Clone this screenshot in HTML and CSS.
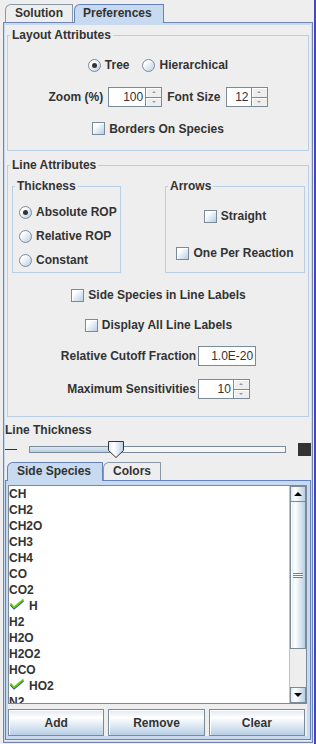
FILE: index.html
```html
<!DOCTYPE html>
<html lang="en">
<head>
  <meta charset="UTF-8">
  <meta name="viewport" content="width=device-width, initial-scale=1.0">
  <title>Preferences</title>
  <link rel="stylesheet" href="styles.css">
</head>
<body>
  <div class="frame">
    <div class="tab-strip">
      <div class="tab tab-solution">Solution</div>
      <div class="tab tab-prefs selected">Preferences</div>
    </div>
    <div class="tab-body main-body">

      <fieldset class="group layout-group">
        <legend>Layout Attributes</legend>
        <div class="layout-inner">
          <div class="row row-radio">
            <span class="opt"><span class="radio on"></span>Tree</span>
            <span class="opt"><span class="radio"></span>Hierarchical</span>
          </div>
          <div class="row row-zoom">
            <span>Zoom (%)</span>
            <span class="spinner w-zoom">
              <span class="spin-field">100</span>
              <span class="spin-btns"><span class="spin-btn up"></span><span class="spin-btn down"></span></span>
            </span>
            <span>Font Size</span>
            <span class="spinner w-font">
              <span class="spin-field">12</span>
              <span class="spin-btns"><span class="spin-btn up"></span><span class="spin-btn down"></span></span>
            </span>
          </div>
          <div class="row row-borders">
            <span class="opt"><span class="check"></span>Borders On Species</span>
          </div>
        </div>
      </fieldset>

      <fieldset class="group line-group">
        <legend>Line Attributes</legend>
        <div class="line-inner">
          <div class="sub-groups">
            <fieldset class="group thickness-group">
              <legend>Thickness</legend>
              <div class="thickness-inner">
                <div class="opt-row"><span class="opt"><span class="radio on"></span>Absolute ROP</span></div>
                <div class="opt-row"><span class="opt"><span class="radio"></span>Relative ROP</span></div>
                <div class="opt-row"><span class="opt"><span class="radio"></span>Constant</span></div>
              </div>
            </fieldset>
            <fieldset class="group arrows-group">
              <legend>Arrows</legend>
              <div class="arrows-inner">
                <div class="opt-row"><span class="opt"><span class="check"></span>Straight</span></div>
                <div class="opt-row"><span class="opt"><span class="check"></span>One Per Reaction</span></div>
              </div>
            </fieldset>
          </div>
          <div class="row row-side">
            <span class="opt"><span class="check"></span>Side Species in Line Labels</span>
          </div>
          <div class="row row-display">
            <span class="opt"><span class="check"></span>Display All Line Labels</span>
          </div>
          <div class="row row-cutoff">
            <span>Relative Cutoff Fraction</span>
            <span class="text-field">1.0E-20</span>
          </div>
          <div class="row row-max">
            <span>Maximum Sensitivities</span>
            <span class="spinner w-max">
              <span class="spin-field">10</span>
              <span class="spin-btns"><span class="spin-btn up"></span><span class="spin-btn down"></span></span>
            </span>
          </div>
        </div>
      </fieldset>

      <div class="slider-label">Line Thickness</div>
      <div class="slider-row">
        <span class="thin-mark"></span>
        <div class="slider-track">
          <div class="slider-fill"></div>
          <svg class="slider-thumb" width="16" height="17" viewBox="0 0 16 17">
            <defs>
              <linearGradient id="thumbFill" x1="0" y1="0" x2="1" y2="0">
                <stop offset="0" stop-color="#dde8f3"/>
                <stop offset="0.35" stop-color="#ffffff"/>
                <stop offset="1" stop-color="#b8cfe5"/>
              </linearGradient>
            </defs>
            <path d="M0.5,0.5 H15.5 V9.5 L8,16.5 L0.5,9.5 Z" fill="url(#thumbFill)" stroke="#333333"/>
          </svg>
        </div>
        <span class="thick-mark"></span>
      </div>

      <div class="tab-strip">
        <div class="tab tab-side selected">Side Species</div>
        <div class="tab tab-colors">Colors</div>
      </div>
      <div class="tab-body species-body">
        <div class="scroll-pane">
          <ul class="species-list">
            <li>CH</li>
            <li>CH2</li>
            <li>CH2O</li>
            <li>CH3</li>
            <li>CH4</li>
            <li>CO</li>
            <li>CO2</li>
            <li class="picked"><svg class="tick" width="16" height="16" viewBox="0 0 16 16"><polyline points="1.5,7 5,11 14.5,3" fill="none" stroke="#2b3bb0" stroke-width="1.2"/><polyline points="1.5,5.5 5,9.5 14.5,1.5" fill="none" stroke="#66cc11" stroke-width="1.8"/></svg>H</li>
            <li>H2</li>
            <li>H2O</li>
            <li>H2O2</li>
            <li>HCO</li>
            <li class="picked"><svg class="tick" width="16" height="16" viewBox="0 0 16 16"><polyline points="1.5,7 5,11 14.5,3" fill="none" stroke="#2b3bb0" stroke-width="1.2"/><polyline points="1.5,5.5 5,9.5 14.5,1.5" fill="none" stroke="#66cc11" stroke-width="1.8"/></svg>HO2</li>
            <li>N2</li>
          </ul>
          <div class="scrollbar">
            <div class="scroll-btn up"></div>
            <div class="scroll-thumb"><span class="grip"></span></div>
            <div class="scroll-track"></div>
            <div class="scroll-btn down"></div>
          </div>
        </div>
        <div class="button-row">
          <div class="button">Add</div>
          <div class="button">Remove</div>
          <div class="button">Clear</div>
        </div>
      </div>
    </div>
  </div>
</body>
</html>
```

FILE: styles.css
```css
* {
  margin: 0;
  padding: 0;
  box-sizing: border-box;
}

body {
  width: 316px;
  height: 744px;
  overflow: hidden;
  background-color: #eeeeee;
  font: bold 12px "Liberation Sans", Arial, sans-serif;
  color: #333333;
}

.frame {
  height: 744px;
  padding: 0 1px 0 3px;
  border-right: 2px solid #4848b8;
}

/* tabs */
.tab-strip {
  display: flex;
  align-items: flex-start;
  height: 22px;
  padding: 4px 0 0 2px;
}

.tab {
  position: relative;
  height: 18px;
  padding-left: 9px;
  line-height: 17px;
  border: 1px solid #8a99a8;
  border-bottom: none;
  border-top-left-radius: 6px;
  background-color: #eeeeee;
  white-space: nowrap;
}

.tab.selected {
  z-index: 1;
  height: 19px;
  border-color: #6382bf;
  background-color: #c8daf0;
}

.tab-solution { width: 68px; }
.tab-prefs { width: 90px; margin-left: 1px; padding-left: 8px; }
.tab-side { width: 96px; }
.tab-colors { width: 58px; }

.tab-body {
  border: 1px solid #6f84b8;
  background-color: #eeeeee;
}

.main-body {
  height: 721px;
  padding: 2px 1px 1px;
  box-shadow: inset 0 2px 0 #c8daf0, inset 1px 0 0 #c8daf0, inset -1px 0 0 #c8daf0, inset 0 -1px 0 #c8daf0;
}

/* titled groups */
.group {
  border: 1px solid #b8cfe5;
  min-width: 0;
}

.group > legend {
  margin-left: 2px;
  padding: 0 2px;
  line-height: 14px;
}

.layout-group { margin: 3px 2px 0; }
.line-group { margin: 7px 2px 0; }

.layout-inner { padding: 13px 0 11px; }

.row {
  display: flex;
  justify-content: center;
  align-items: center;
}

.row-radio { height: 20px; gap: 13px; }
.row-zoom { height: 20px; margin-top: 12px; gap: 5px; }
.row-borders { height: 21px; margin-top: 11px; }

.line-inner { padding: 7px 3px 17px 4px; }

.sub-groups {
  display: flex;
  justify-content: space-between;
}

.thickness-group { width: 109px; }
.arrows-group { width: 140px; }

.thickness-inner { padding-top: 7px; }
.thickness-inner .opt-row { height: 24px; padding-left: 6px; }

.arrows-inner { padding: 11px 0 7px; }
.arrows-inner .opt-row { height: 24px; justify-content: center; }
.arrows-inner .opt-row + .opt-row { margin-top: 13px; }

.opt-row {
  display: flex;
  align-items: center;
}

.row-side { height: 20px; margin-top: 12px; }
.row-display { height: 20px; margin-top: 10px; }
.row-cutoff { height: 20px; margin-top: 11px; gap: 2px; }
.row-max { height: 20px; margin-top: 13px; gap: 2px; }

/* controls */
.opt {
  display: inline-flex;
  align-items: center;
  gap: 4px;
  white-space: nowrap;
}

.radio {
  display: flex;
  justify-content: center;
  align-items: center;
  width: 13px;
  height: 13px;
  border: 1px solid #7a8a99;
  border-radius: 50%;
  background: linear-gradient(135deg, #ffffff 25%, #b8cfe5);
}

.radio.on::after {
  content: "";
  width: 5px;
  height: 5px;
  border-radius: 50%;
  background-color: #333333;
}

.check {
  width: 13px;
  height: 13px;
  border: 1px solid #7a8a99;
  background: linear-gradient(135deg, #ffffff 25%, #b8cfe5);
  box-shadow: inset 1px 1px 0 #ffffff;
}

.spinner {
  display: flex;
  height: 20px;
  border: 1px solid #7a8a99;
  background-color: #ffffff;
  font-weight: normal;
}

.w-zoom { width: 54px; }
.w-font { width: 42px; }
.w-max { width: 52px; }

.spin-field {
  flex: 1;
  padding-right: 2px;
  line-height: 18px;
  text-align: right;
}

.spin-btns {
  display: flex;
  flex-direction: column;
  width: 16px;
  border-left: 1px solid #7a8a99;
}

.spin-btn {
  display: flex;
  justify-content: center;
  align-items: center;
  flex: 1;
  background-color: #eeeeee;
  box-shadow: inset 1px 1px 0 #ffffff;
}

.spin-btn.up { border-bottom: 1px solid #7a8a99; }

.spin-btn::after {
  content: "";
  border-left: 2px solid transparent;
  border-right: 2px solid transparent;
}

.spin-btn.up::after { border-bottom: 2px solid #9a9a9a; }
.spin-btn.down::after { border-top: 2px solid #9a9a9a; }

.text-field {
  width: 58px;
  height: 20px;
  padding-right: 2px;
  border: 1px solid #7a8a99;
  background-color: #ffffff;
  font-weight: normal;
  line-height: 18px;
  text-align: right;
}

/* slider */
.slider-label {
  margin-top: 6px;
  line-height: 14px;
}

.slider-row {
  display: flex;
  align-items: center;
  gap: 12px;
  height: 17px;
  margin-top: 4px;
}

.thin-mark {
  width: 12px;
  height: 1px;
  background-color: #333333;
}

.slider-track {
  position: relative;
  flex: 1;
  height: 7px;
  border: 1px solid #7a8a99;
  background-color: #f6f6f6;
}

.slider-fill {
  width: 86px;
  height: 100%;
  background: linear-gradient(#dde8f3, #b8cfe5);
}

.slider-thumb {
  position: absolute;
  top: -6px;
  left: 78px;
}

.thick-mark {
  width: 13px;
  height: 13px;
  background-color: #333333;
}

/* species list */
.species-body {
  height: 260px;
  padding: 4px 3px 3px 2px;
  border-color: #6382bf;
  box-shadow: inset 0 4px 0 #c8daf0, inset 2px 0 0 #c8daf0, inset -3px 0 0 #c8daf0, inset 0 -3px 0 #c8daf0;
}

.scroll-pane {
  display: flex;
  height: 219px;
  border: 1px solid #7a8a99;
}

.species-list {
  flex: 1;
  overflow: hidden;
  list-style: none;
  background-color: #ffffff;
}

.species-list li {
  display: flex;
  align-items: center;
  height: 16px;
  white-space: nowrap;
}

.species-list .tick { margin-right: 4px; }

.scrollbar {
  display: flex;
  flex-direction: column;
  width: 17px;
  border-left: 1px solid #b8c4d0;
  background-color: #eeeeee;
}

.scroll-btn {
  display: flex;
  justify-content: center;
  align-items: center;
  height: 16px;
  border: 1px solid #7a8a99;
  background: linear-gradient(to right, #dde8f3, #ffffff 30%, #b8cfe5);
}

.scroll-btn::after {
  content: "";
  border-left: 4px solid transparent;
  border-right: 4px solid transparent;
}

.scroll-btn.up::after { border-bottom: 4px solid #000000; }
.scroll-btn.down::after { border-top: 4px solid #000000; }

.scroll-thumb {
  display: flex;
  justify-content: center;
  align-items: center;
  height: 147px;
  border: 1px solid #7a8a99;
  border-top: none;
  background: linear-gradient(to right, #dde8f3, #ffffff 30%, #b8cfe5);
  box-shadow: inset 1px 0 0 #ffffff;
}

.grip {
  width: 10px;
  height: 5px;
  background: repeating-linear-gradient(#6382bf 0 1px, #ffffff 1px 2px);
}

.scroll-track { flex: 1; }

.button-row {
  display: grid;
  grid-template-columns: repeat(3, 1fr);
  gap: 4px;
  height: 27px;
  margin: 5px 2px 0 0;
}

.button {
  display: flex;
  justify-content: center;
  align-items: center;
  border: 1px solid #7a8a99;
  background: linear-gradient(#dde8f3, #ffffff 30%, #b8cfe5);
  box-shadow: inset 1px 1px 0 #ffffff;
}
```
